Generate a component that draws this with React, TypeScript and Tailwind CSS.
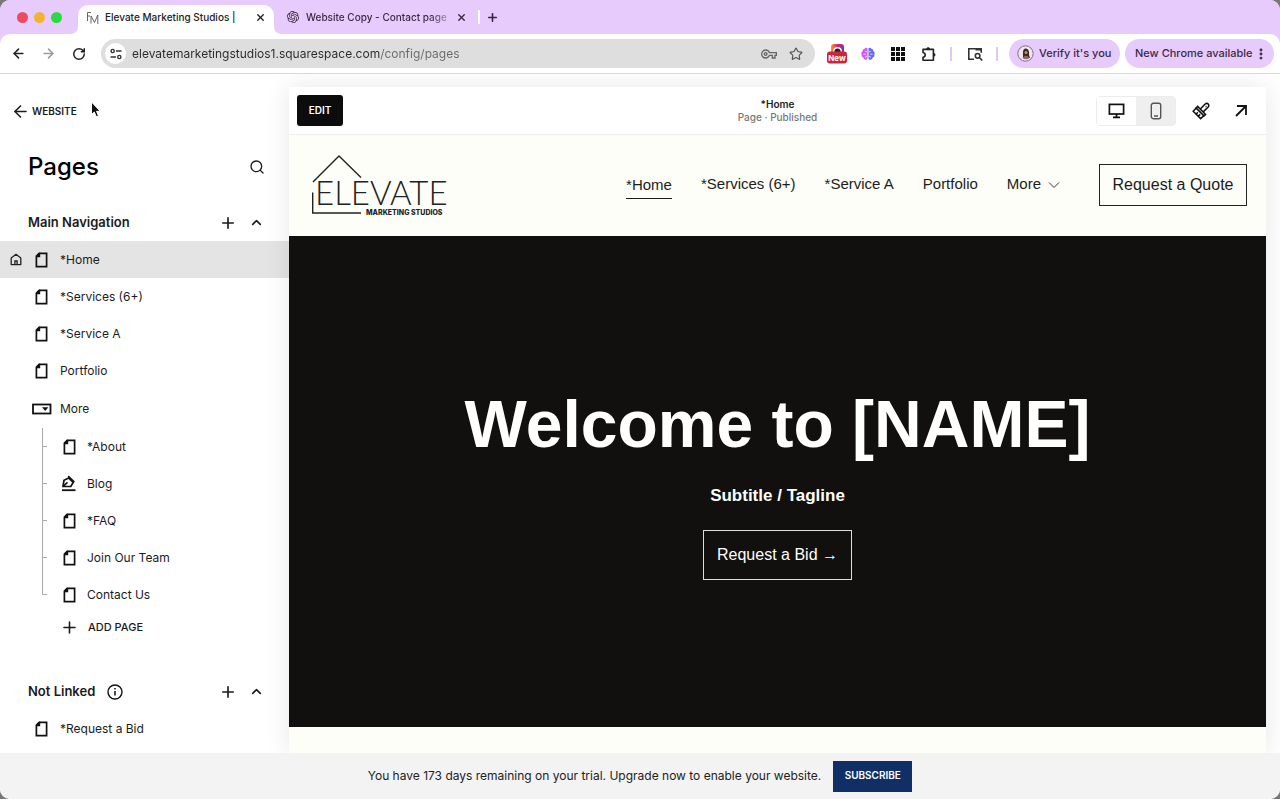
import { useState } from "react";
import type { ReactNode } from "react";
import { ArrowLeft, ArrowRight, ChevronUp, EllipsisVertical, Plus, RotateCw, Search, Star, X } from "lucide-react";
import { SiOpenai } from "react-icons/si";
import { MdOutlineVpnKey } from "react-icons/md";

type PageItem = { title: string; icon?: "page" | "blog"; home?: boolean };

const mainPages: PageItem[] = [
  { title: "*Home", home: true },
  { title: "*Services (6+)" },
  { title: "*Service A" },
  { title: "Portfolio" },
];

const morePages: PageItem[] = [
  { title: "*About" },
  { title: "Blog", icon: "blog" },
  { title: "*FAQ" },
  { title: "Join Our Team" },
  { title: "Contact Us" },
];

const PageIcon = () => (
  <svg width="13" height="16" viewBox="0 0 13 16" fill="none" className="shrink-0">
    <path d="M4.2 1.4h7.4v13.2H1.4V4.2z" stroke="#111" strokeWidth="1.7" />
    <path d="M1 5.2V4L4 .8h1.2v4.4z" fill="#111" />
  </svg>
);

const BlogIcon = () => (
  <svg width="16" height="17" viewBox="0 0 16 17" fill="none" stroke="#111" className="shrink-0">
    <path d="M2 11.5 3 5.3 7.6 3l4.6 4.4-2.4 4.1z" strokeWidth="1.7" />
    <path d="M7.2 1 13.4 7M2.2 11.3l4.3-4" strokeWidth="1.6" />
    <path d="M1 15.2h13.5" strokeWidth="1.8" />
  </svg>
);

const FolderIcon = () => (
  <svg width="20" height="12" viewBox="0 0 20 12" className="shrink-0">
    <rect x="1" y="1.5" width="17.5" height="9" fill="none" stroke="#111" strokeWidth="1.8" />
    <path d="M10 4.2h6.4l-3.2 3.8z" fill="#111" />
  </svg>
);

const HomeIcon = () => (
  <svg width="12" height="13" viewBox="0 0 12 13" fill="none" stroke="#222" className="shrink-0">
    <path d="M1.2 5 6 1.3 10.8 5v6.6H1.2z" strokeWidth="1.3" strokeLinejoin="round" />
    <path d="M4.9 11.5V8h2.2v3.5" strokeWidth="1.3" />
  </svg>
);

const InfoIcon = () => (
  <svg width="16" height="16" viewBox="0 0 16 16" fill="none" stroke="#111">
    <circle cx="8" cy="8" r="7" strokeWidth="1.4" />
    <path d="M8 7v4.5M8 4v1.6" strokeWidth="1.5" />
  </svg>
);

const MonitorIcon = () => (
  <svg width="17" height="16" viewBox="0 0 17 16" fill="none" stroke="#111">
    <rect x="1.4" y="1.4" width="14.2" height="9.6" strokeWidth="1.7" />
    <path d="M8.5 11v3M5 14.4h7" strokeWidth="1.7" />
  </svg>
);

const PhoneIcon = () => (
  <svg width="12" height="18" viewBox="0 0 12 18" fill="none" stroke="#555">
    <rect x="1.3" y="1.3" width="9.4" height="15.4" rx="2" strokeWidth="1.4" />
    <path d="M4 14h4" strokeWidth="1.3" />
  </svg>
);

const BrushIcon = () => (
  <svg width="18" height="18" viewBox="0 0 18 18" fill="none" stroke="#111" strokeWidth="1.5">
    <path d="m5.6 4.4 8 8-1.6 1.5-8-8z" />
    <path d="m4.2 6-3 3.2 7.4 7.4 3.2-3M3.9 12.2l2-1.8M6.2 14.4l2-2" />
    <path d="m8.3 7 4.9-5q1.8-1.3 3 0t0 3l-5 4.9" />
    <path d="M13.6 4.4h.9" />
  </svg>
);

const TuneIcon = () => (
  <svg width="12" height="12" viewBox="0 0 12 12" fill="none" stroke="#333" strokeWidth="1.4">
    <circle cx="2.7" cy="3" r="1.6" />
    <path d="M6 3h5.5M.5 9H6" />
    <circle cx="9.3" cy="9" r="1.6" />
  </svg>
);

const TabSearchIcon = () => (
  <svg width="16" height="14" viewBox="0 0 16 14" fill="none" stroke="#333" strokeWidth="1.6">
    <path d="M7 12.2H1.8V1.8h12.4v4M8.5 2.8h5.5" />
    <circle cx="10.6" cy="8.8" r="2.3" />
    <path d="m12.3 10.5 3 3" />
  </svg>
);

const PuzzleIcon = () => (
  <svg width="16" height="16" viewBox="0 0 16 16" fill="none" stroke="#222" strokeWidth="1.6">
    <path d="M2 3.4h10.4v10.8H2v-3q2.2-.4 2.2-2.3T2 6.500z" strokeLinejoin="round" />
    <path d="M5.6 3.200a1.6 1.6 0 0 1 3.200 0zM12.600 7.300a1.500 1.500 0 0 1 0 3z" fill="#222" strokeWidth=".8" />
  </svg>
);

const BrainIcon = () => (
  <svg width="14" height="14" viewBox="0 0 14 14" fill="none">
    <path d="M6.500 1.200Q4.800 0 3.600 1.800 1.600 2 1.700 4-.2 5.200.6 7.300.2 10 2.200 10.600 3 13 5 12.800q1.500 0 1.500-1.500z" fill="#d65bea" />
    <path d="M7.500 1.200Q9.200 0 10.400 1.800q2 .2 1.900 2.200 1.900 1.200 1.100 3.300.4 2.700-1.600 3.300Q11 13 9 12.800q-1.500 0-1.500-1.500z" fill="#5e6df2" />
    <path d="M4.200 4.200 6 5M2.500 7.200h2.300M4 10.300l2-1M9.800 4.200 8 5M11.500 7.200H9.200M10 10.300l-2-1" stroke="#f0dcfb" strokeWidth=".9" />
  </svg>
);

const CameraIcon = () => (
  <svg width="22" height="20" viewBox="0 0 22 20">
    <defs>
      <linearGradient id="camera" x1="0" x2="1">
        <stop offset="0" stopColor="#f3992f" />
        <stop offset=".5" stopColor="#d42a70" />
        <stop offset="1" stopColor="#8a2bb8" />
      </linearGradient>
    </defs>
    <rect x="5" y="0" width="13" height="12" rx="3" fill="url(#camera)" />
    <path d="M7 8q0-5 4.500-5T16 8z" fill="#fff" />
    <path d="M8.300 8q0-3.500 3.200-3.500T14.700 8z" fill="#222" />
    <rect x="1" y="7.500" width="20" height="12" rx="3" fill="#cf2338" />
    <text x="11" y="16.500" textAnchor="middle" fontSize="8" fontWeight="700" fill="#fff">
      New
    </text>
  </svg>
);

const Avatar = () => (
  <svg width="17" height="17" viewBox="0 0 17 17">
    <circle cx="8.500" cy="8.500" r="7.700" fill="#efe6ea" stroke="#7e6d8c" strokeWidth="1" />
    <path d="M6 7q.2-3.600 2.800-3.600T12 7v3l1 3H6z" fill="#3b2926" />
    <circle cx="9" cy="7.500" r="1.500" fill="#c19070" />
    <path d="M5.500 13q3.500-4.500 7 0-3.500 2.400-7 0z" fill="#8b6a5f" />
  </svg>
);

const SiteMark = () => (
  <svg width="13" height="14" viewBox="0 0 13 14" fill="none" stroke="#555" strokeWidth=".9">
    <path d="M5 1.500H1.500v8.500M1.500 5H4M5 12.500V5l3.500 6.500L11.800 4v9" />
  </svg>
);

const Logo = () => (
  <svg width="138" height="62" viewBox="0 0 138 62" fill="none" className="shrink-0" role="img" aria-label="Elevate Marketing Studios">
    <path d="M2 28 28 2 50 23.500M1.700 38.500V59H50" stroke="#222" strokeWidth="1.400" />
    <text x="4" y="51" fontSize="33" fontWeight="300" fill="#222" className="font-['Lato',sans-serif]">
      ELEVATE
    </text>
    <text x="55" y="61" fontSize="7" fontWeight="800" fill="#222" className="font-['Inter',sans-serif]">
      MARKETING STUDIOS
    </text>
  </svg>
);

function BrowserTabs() {
  return (
    <div className="flex h-[34px] items-center bg-[#e6cbfc] pl-[17px] text-[#36263f]">
      <div className="flex gap-1.5">
        <span className="size-[11px] rounded-full bg-[#ed4b5f]" />
        <span className="size-[11px] rounded-full bg-[#f4b32e]" />
        <span className="size-[11px] rounded-full bg-[#2ed843]" />
      </div>
      <div className="relative ml-4 flex h-[29px] w-[196px] items-center self-end rounded-t-[10px] bg-white px-2 pb-1 text-[#222]">
        <svg width="8" height="8" className="absolute bottom-0 -left-2" fill="#fff">
          <path d="M8 0v8H0q8 0 8-8z" />
        </svg>
        <svg width="8" height="8" className="absolute -right-2 bottom-0" fill="#fff">
          <path d="M0 0v8h8Q0 8 0 0z" />
        </svg>
        <SiteMark />
        <span className="ml-1.5 flex-1 text-[10px] font-medium whitespace-nowrap">Elevate Marketing Studios |</span>
        <button aria-label="Close tab">
          <X size={11} strokeWidth={3} />
        </button>
      </div>
      <div className="ml-[13px] flex items-center">
        <SiOpenai size={12} />
        <span className="ml-[7px] w-[145px] overflow-hidden bg-gradient-to-r from-[#36263f] from-85% to-[#36263f]/20 bg-clip-text text-[10px] font-medium whitespace-nowrap text-transparent">
          Website Copy - Contact page
        </span>
        <button aria-label="Close tab" className="ml-[5px]">
          <X size={11} strokeWidth={3} />
        </button>
        <span className="ml-[11px] h-3.5 w-0.5 bg-white" />
        <button aria-label="New tab" className="ml-1.5">
          <Plus size={13} strokeWidth={3} />
        </button>
      </div>
    </div>
  );
}

function Toolbar() {
  return (
    <div className="bg-[#e6cbfc]">
      <div className="flex h-10 items-center rounded-t-[10px] border-b border-[#d9d9d9] bg-white pr-1.5 pl-[11px] text-[#222]">
        <button aria-label="Back">
          <ArrowLeft size={15} strokeWidth={2.4} />
        </button>
        <button aria-label="Forward" className="ml-[15px] text-[#999]">
          <ArrowRight size={15} strokeWidth={2.4} />
        </button>
        <button aria-label="Reload" className="ml-4">
          <RotateCw size={14} strokeWidth={2.6} />
        </button>
        <div className="ml-[15px] flex h-[29px] flex-1 items-center rounded-full bg-[#dedede] pr-3 pl-1">
          <button aria-label="Site information" className="flex size-[21px] items-center justify-center rounded-full bg-white">
            <TuneIcon />
          </button>
          <input
            aria-label="Address"
            defaultValue="elevatemarketingstudios1.squarespace.com/config/pages"
            className="ml-1.5 flex-1 bg-linear-to-r from-[#2a2a2a] from-[248px] to-[#6a6a6a] to-[248px] bg-clip-text text-xs text-transparent outline-none"
          />
          <MdOutlineVpnKey size={16} className="text-[#666]" />
          <button aria-label="Bookmark" className="ml-3 text-[#555]">
            <Star size={14} />
          </button>
        </div>
        <div className="ml-[11px] flex items-center">
          <CameraIcon />
          <span className="ml-[13px]">
            <BrainIcon />
          </span>
          <svg width="14" height="14" viewBox="0 0 14 14" fill="#111" className="mx-4">
            {[0, 5, 10].map((y) => [0, 5, 10].map((x) => <rect key={`${x}-${y}`} x={x} y={y} width="4" height="4" />))}
          </svg>
          <PuzzleIcon />
        </div>
        <span className="ml-[13px] h-3.5 w-0.5 bg-[#e1c8f6]" />
        <button aria-label="Search tabs" className="ml-[15px]">
          <TabSearchIcon />
        </button>
        <span className="ml-[13px] h-3.5 w-0.5 bg-[#e1c8f6]" />
        <button className="ml-[11px] flex h-[29px] w-[111px] items-center gap-[5px] rounded-full bg-[#e6cbfc] pl-2 text-[11px] font-medium whitespace-nowrap text-[#3b2a46]">
          <Avatar />
          Verify it's you
        </button>
        <button className="ml-[5px] flex h-[29px] w-[149px] items-center justify-between rounded-full bg-[#e6cbfc] pr-1.5 pl-2.5 text-[11px] font-medium whitespace-nowrap text-[#3b2a46]">
          New Chrome available
          <EllipsisVertical size={14} strokeWidth={3} />
        </button>
      </div>
    </div>
  );
}

function SectionHeader({ title, children }: { title: string; children?: ReactNode }) {
  return (
    <div className="flex h-[37px] items-center pr-[25px] pl-7">
      <h2 className="text-[13px] font-semibold">{title}</h2>
      {children}
      <div className="ml-auto flex items-center gap-3">
        <button aria-label={`Add page to ${title}`}>
          <Plus size={18} strokeWidth={2.2} />
        </button>
        <button aria-label={`Collapse ${title}`}>
          <ChevronUp size={15} strokeWidth={2.6} />
        </button>
      </div>
    </div>
  );
}

function PageRow({ title, home }: PageItem) {
  return (
    <li>
      <a href="#" className={`flex h-[37px] items-center text-xs ${home ? "bg-[#e4e4e4]" : ""}`}>
        <span className="flex w-[35px] pl-2.5">{home && <HomeIcon />}</span>
        <PageIcon />
        <span className="ml-3">{title}</span>
      </a>
    </li>
  );
}

function Sidebar() {
  return (
    <aside className="flex w-[289px] shrink-0 flex-col text-[#1b1b1b]">
      <a href="#" className="mt-[27px] ml-[11px] flex h-5 items-center gap-0.5 text-[10px] font-semibold">
        <ArrowLeft size={19} strokeWidth={2} />
        WEBSITE
      </a>
      <div className="mt-7 flex h-9 items-center justify-between pr-6 pl-7">
        <h1 className="text-2xl font-medium text-black">Pages</h1>
        <button aria-label="Search pages">
          <Search size={16} />
        </button>
      </div>
      <div className="mt-[19px]">
        <SectionHeader title="Main Navigation" />
      </div>
      <ul>
        {mainPages.map((page) => (
          <PageRow key={page.title} {...page} />
        ))}
        <li>
          <a href="#" className="flex h-[39px] items-center pl-8 text-xs">
            <FolderIcon />
            <span className="ml-2">More</span>
          </a>
          <ul className="ml-[42px]">
            {morePages.map((page, i) => (
              <li key={page.title}>
                <a href="#" className="flex h-[37px] items-center text-xs">
                  <span className="flex h-full w-[5px] flex-col">
                    <span className="h-[19px] border-b border-l border-[#aaa]" />
                    <span className={`flex-1 ${i < morePages.length - 1 ? "border-l border-[#aaa]" : ""}`} />
                  </span>
                  <span className="ml-3.5 flex w-4 justify-center">{page.icon === "blog" ? <BlogIcon /> : <PageIcon />}</span>
                  <span className="ml-2.5">{page.title}</span>
                </a>
              </li>
            ))}
          </ul>
        </li>
      </ul>
      <button className="ml-[60px] flex h-7 items-center gap-[9px] text-[11px] font-medium">
        <Plus size={19} strokeWidth={2} />
        ADD PAGE
      </button>
      <div className="mt-8">
        <SectionHeader title="Not Linked">
          <button aria-label="About unlinked pages" className="ml-3">
            <InfoIcon />
          </button>
        </SectionHeader>
      </div>
      <ul>
        <PageRow title="*Request a Bid" />
      </ul>
    </aside>
  );
}

function PreviewBar() {
  const [device, setDevice] = useState("desktop");

  return (
    <div className="grid h-12 grid-cols-3 items-center border-b border-[#eee] bg-white px-2">
      <div>
        <button className="h-[31px] w-[46px] rounded-[3px] bg-[#0c0c0c] text-[10px] font-semibold text-white">EDIT</button>
      </div>
      <div className="text-center text-[10px] leading-[13px] font-medium">
        <p className="font-semibold text-[#222]">*Home</p>
        <p className="text-[#777]">Page · Published</p>
      </div>
      <div className="flex items-center justify-end pr-2.5">
        <div className="mr-4 flex rounded-sm border border-[#ececec]">
          <button
            aria-label="Desktop view"
            onClick={() => setDevice("desktop")}
            className={`flex h-7 w-[39px] items-center justify-center ${device === "desktop" ? "bg-white" : "bg-[#efefef]"}`}
          >
            <MonitorIcon />
          </button>
          <button
            aria-label="Mobile view"
            onClick={() => setDevice("mobile")}
            className={`flex h-7 w-[39px] items-center justify-center ${device === "mobile" ? "bg-white" : "bg-[#efefef]"}`}
          >
            <PhoneIcon />
          </button>
        </div>
        <button aria-label="Site styles">
          <BrushIcon />
        </button>
        <button aria-label="Open site" className="ml-6">
          <svg width="14" height="14" viewBox="0 0 14 14" fill="none" stroke="#111" strokeWidth="1.8">
            <path d="M2 12 12 2M3 2h9v9" />
          </svg>
        </button>
      </div>
    </div>
  );
}

function SitePreview() {
  return (
    <main className="mt-[13px] mr-3.5 flex min-w-0 flex-1 flex-col bg-[#fdfef8] shadow-[0_0_24px_rgba(0,0,0,0.10)]">
      <PreviewBar />
      <div className="flex flex-1 flex-col font-['Liberation_Sans',Arial,sans-serif]">
        <header className="flex h-[101px] items-center pr-[19px] pb-0.5 pl-[22px] text-[15px] text-[#1c1c1a]">
          <Logo />
          <nav className="ml-auto flex items-center gap-[29px]">
            <a href="#" className="border-b border-[#1c1c1a] pt-[5px] pb-1 leading-[18px]">
              *Home
            </a>
            <a href="#">*Services (6+)</a>
            <a href="#">*Service A</a>
            <a href="#">Portfolio</a>
            <button className="flex items-center gap-[7px]">
              More
              <svg width="12" height="8" viewBox="0 0 12 8" fill="none" stroke="#333">
                <path d="m1 1.500 5 5 5-5" />
              </svg>
            </button>
          </nav>
          <a href="#" className="ml-[39px] flex h-[42px] w-[148px] items-center justify-center border border-[#222] text-base">
            Request a Quote
          </a>
        </header>
        <section className="flex flex-1 flex-col items-center justify-center bg-[#11100e] pt-2 text-[#fefefc]">
          <h1 className="text-[66px] leading-[64px] font-bold">Welcome to [NAME]</h1>
          <p className="mt-7 text-[17px] leading-6 font-bold">Subtitle / Tagline</p>
          <a href="#" className="mt-[22px] flex h-[50px] w-[149px] items-center justify-center border border-[#ddd] text-base">
            Request a Bid →
          </a>
        </section>
        <div className="h-[26px]" />
      </div>
    </main>
  );
}

export default function App() {
  return (
    <div className="bg-[#777]">
      <div className="relative flex min-h-screen flex-col overflow-hidden rounded-[10px] bg-white font-['Inter','Liberation_Sans',sans-serif]">
        <BrowserTabs />
        <Toolbar />
        <div className="flex flex-1 overflow-hidden">
          <Sidebar />
          <SitePreview />
        </div>
        <footer className="flex h-[46px] items-center justify-center gap-3 bg-[#f3f3f3] text-xs text-[#222]">
          <p>You have 173 days remaining on your trial. Upgrade now to enable your website.</p>
          <button className="h-[31px] w-[79px] bg-[#102f64] text-[10px] font-semibold text-white">SUBSCRIBE</button>
        </footer>
        <svg width="12" height="18" viewBox="0 0 12 18" className="absolute top-[101px] left-[90px]">
          <path d="M1.500 1v12.500l2.800-2.400 2 4.600 2.200-1-2-4.400h3.800z" fill="#111" stroke="#fff" />
        </svg>
      </div>
    </div>
  );
}
